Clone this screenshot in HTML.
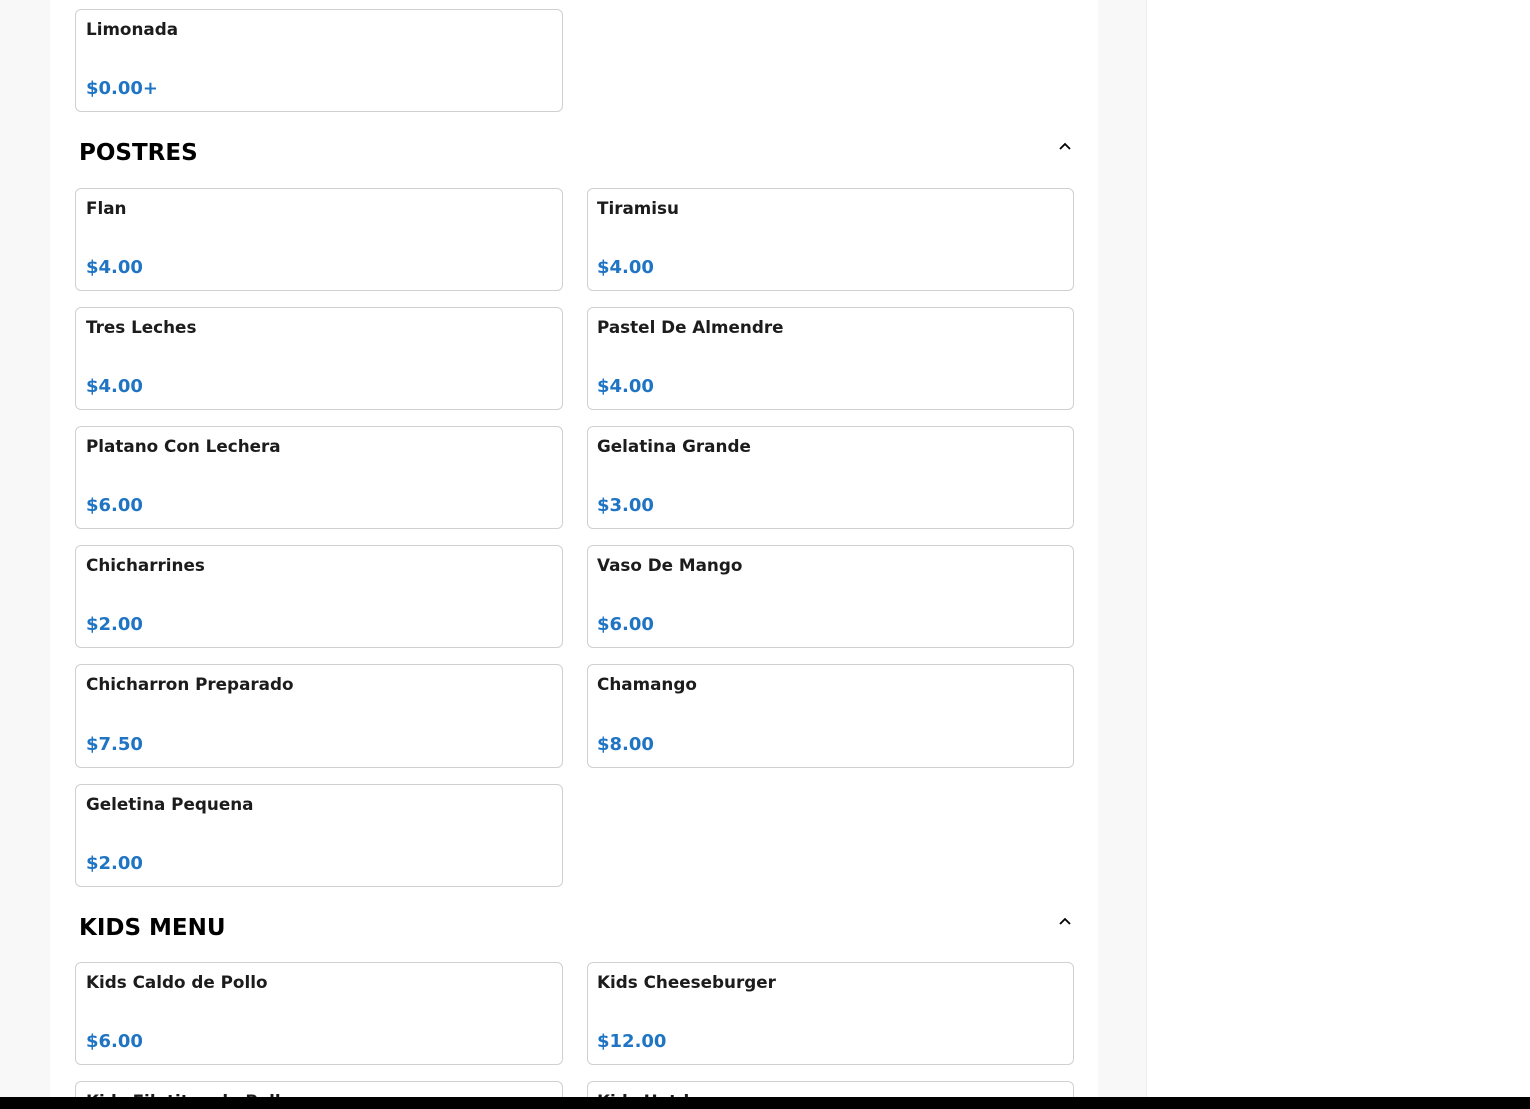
<!DOCTYPE html>
<html style="overflow:hidden;height:1109px"><head><meta charset="utf-8"><style>
*{box-sizing:border-box;margin:0;padding:0}
body{width:1530px;height:1109px;overflow:hidden;background:#fff;font-family:"DejaVu Sans","Liberation Sans",sans-serif;position:relative}
#w{position:absolute;left:0;top:0;width:1530px;height:1109px;overflow:hidden}
.lg{position:absolute;left:0;top:0;width:50px;height:1109px;background:#f8f8f8}
.rg{position:absolute;left:1098px;top:0;width:49px;height:1109px;background:#f8f8f8;border-right:1px solid #ececec}
.card{position:absolute;width:488px;height:103px;border:1px solid #d0d0d0;border-radius:6px;background:#fff}
.card .t{position:absolute;left:10px;top:9px;font-weight:bold;font-size:16.8px;color:#1c1c1c}
.card .p{position:absolute;left:10px;top:68px;font-weight:bold;font-size:18px;color:#1f74c4}
.r{width:487px}
.r .t,.r .p{left:9px}
.cut{height:16px;border-bottom:none;border-radius:6px 6px 0 0;overflow:hidden}
.h{position:absolute;left:79px;font-weight:bold;font-size:23px;color:#000}
.chev{position:absolute;left:1058px;width:14px;height:10px}
.bar{position:absolute;left:0;top:1097px;width:1530px;height:12px;background:#000}
</style></head><body><div id="w">
<div class="lg"></div><div class="rg"></div>

<div class="card" style="left:75px;top:9px"><div class="t">Limonada</div><div class="p">$0.00+</div></div>

<div class="h" style="top:140px">POSTRES</div>
<svg class="chev" style="top:141px" viewBox="0 0 14 10"><path d="M2 8 L7 3 L12 8" fill="none" stroke="#000" stroke-width="1.8"/></svg>

<div class="card" style="left:75px;top:188px"><div class="t">Flan</div><div class="p">$4.00</div></div>
<div class="card r" style="left:587px;top:188px"><div class="t">Tiramisu</div><div class="p">$4.00</div></div>
<div class="card" style="left:75px;top:307px"><div class="t">Tres Leches</div><div class="p">$4.00</div></div>
<div class="card r" style="left:587px;top:307px"><div class="t">Pastel De Almendre</div><div class="p">$4.00</div></div>
<div class="card" style="left:75px;top:426px"><div class="t">Platano Con Lechera</div><div class="p">$6.00</div></div>
<div class="card r" style="left:587px;top:426px"><div class="t">Gelatina Grande</div><div class="p">$3.00</div></div>
<div class="card" style="left:75px;top:545px"><div class="t">Chicharrines</div><div class="p">$2.00</div></div>
<div class="card r" style="left:587px;top:545px"><div class="t">Vaso De Mango</div><div class="p">$6.00</div></div>
<div class="card" style="left:75px;top:664px;height:104px"><div class="t">Chicharron Preparado</div><div class="p" style="top:69px">$7.50</div></div>
<div class="card r" style="left:587px;top:664px;height:104px"><div class="t">Chamango</div><div class="p" style="top:69px">$8.00</div></div>
<div class="card" style="left:75px;top:784px"><div class="t">Geletina Pequena</div><div class="p">$2.00</div></div>

<div class="h" style="top:915px">KIDS MENU</div>
<svg class="chev" style="top:916px" viewBox="0 0 14 10"><path d="M2 8 L7 3 L12 8" fill="none" stroke="#000" stroke-width="1.8"/></svg>

<div class="card" style="left:75px;top:962px"><div class="t">Kids Caldo de Pollo</div><div class="p">$6.00</div></div>
<div class="card r" style="left:587px;top:962px"><div class="t">Kids Cheeseburger</div><div class="p">$12.00</div></div>
<div class="card cut" style="left:75px;top:1081px"><div class="t">Kids Filetitos de Pollo</div></div>
<div class="card r cut" style="left:587px;top:1081px"><div class="t">Kids Hotdog</div></div>

<div class="bar"></div>
</div></body></html>
